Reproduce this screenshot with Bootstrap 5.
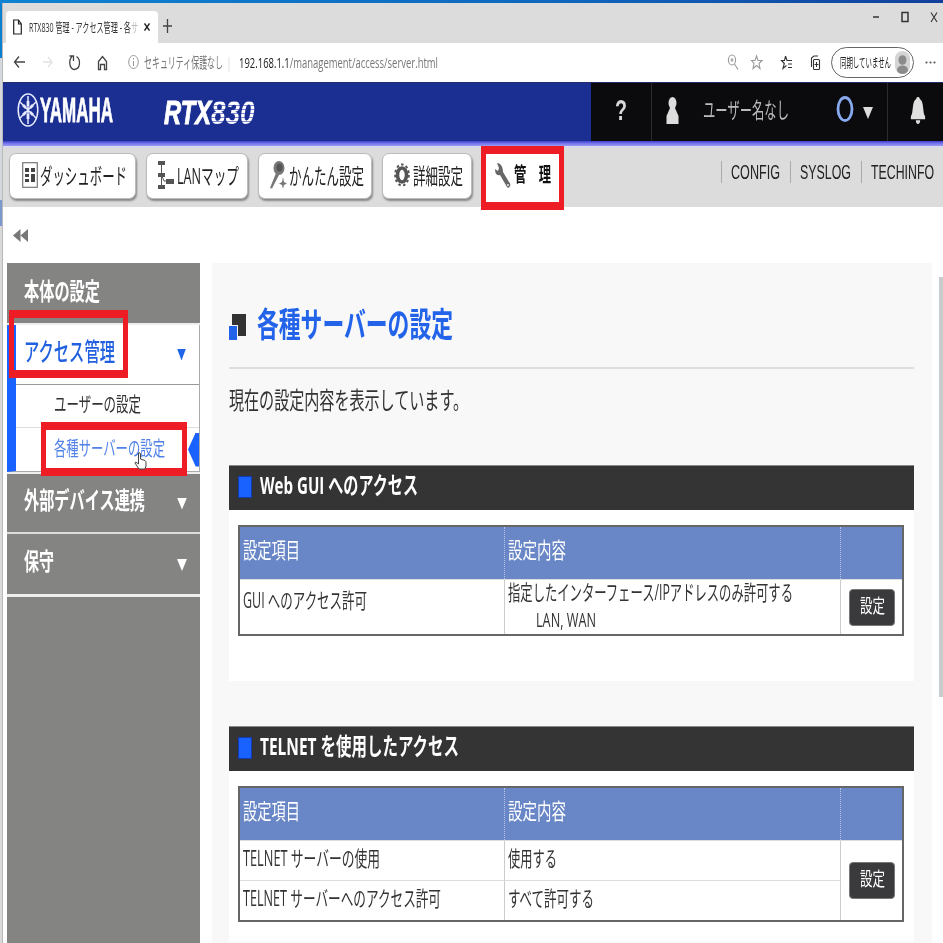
<!DOCTYPE html>
<html lang="ja">
<head>
<meta charset="utf-8">
<title>RTX830 管理</title>
<link rel="stylesheet" href="https://cdn.jsdelivr.net/npm/bootstrap@5.3.0/dist/css/bootstrap.min.css">
<style>
body{width:943px;height:943px;overflow:hidden;background:#fff;color:#333;font-family:"Open Sans","Noto Sans CJK JP",sans-serif;line-height:1;}
.desk{width:943px;height:943px;background:linear-gradient(#0b7fd0 0 58px,#d5d9dd 58px 200px,#7c98cf 200px 226px,#d9d9d9 226px);padding:3px 0 0 2px;}
.deskbar{top:0;left:0;height:3px;background:linear-gradient(90deg,#0e83d2,#0f66bd 60%,#11409c);}
.win{height:940px;background:#fff;border-left:1px solid #b9b9b9}
.fit{display:inline-block;white-space:nowrap;transform-origin:0 50%;flex:none}
svg{flex:none;display:block}
.tabs{height:40px;background:#dcdcdc;padding:8px 0 0 3px}
.tab-on{width:152px;height:32px;background:#fff;border-radius:4px 4px 0 0;padding-left:7px;font-size:13px}
.addr{height:39px;font-size:15px;color:#777}
.pill{width:83px;height:31px;border:1.5px solid #666;border-radius:16px;font-size:13px;color:#222;padding-left:8px}
.avatar{width:15px;height:23px;border-radius:8px;background:#d4d4d4;overflow:hidden}
.hdr{height:59px;background:#1b2f92;border-top:1px solid #222c66;color:#fff}
.hdr-r{width:352px;background:#0b0b0e}
.cell-r{border-left:1px solid #2c2c30}
.logo-a,.logo-b{font:italic 700 34px/36px "Liberation Sans",sans-serif}
.logo-a{-webkit-text-stroke:1px #fff}
.logo-b{color:transparent;background:repeating-linear-gradient(#fff 0 2.7px,#7d8bd0 2.7px 4px);-webkit-background-clip:text;background-clip:text;padding-right:3px}
.strip{height:5px;background:linear-gradient(#3d3cc8,#7776ee 50%,#9b9af0)}
.mainnav{height:61px;background:#dcdcdc;border-top:2px solid #dadaec;padding-left:6px}
.nbtn{height:46px;background:#fff;border:1px solid #bbb;border-radius:7px;box-shadow:1px 2px 2px #888;font-size:22px;color:#222;padding:0 0 2px}
.lnk{font-family:"Liberation Sans",sans-serif;font-size:21px;color:#222;border-left:1px solid #aaa;height:22px}
.side{width:193px;margin-left:4px;background:#848483;color:#fff;height:680px;font-size:24px;font-weight:700}
.mi{height:60px;padding-left:17px;padding-right:13px}
.sub{background:#fff;border-left:9px solid #1a62ff;height:147px;border-right:1px solid #aaa;color:#333;font-weight:400;border-bottom:1px solid #aaa}
.tri{width:10px;height:12px;background:#fff;clip-path:polygon(0 0,100% 0,50% 100%)}
.content-bg{width:720px;margin-left:12px;background:#f8f8f8;height:680px;padding:0 18px 0 17px}
.ttl{height:106px;font-size:34px;font-weight:700;color:#2263ea;border-bottom:2px solid #dedddb;padding-top:18px}
.desc{height:96px;padding-top:19px;font-size:24px}
.pan{background:#fff;height:216px;margin-bottom:45px}
.pan-h{height:45px;background:#343434;border-top:1px solid #888;color:#fff;font-weight:700;font-size:24px;padding:0 0 4px 10px}
.sq{width:12px;height:20px;background:#1a62ff;outline:1px solid #123ab0;margin-top:2px}
.tb{width:666px;margin:15px 0 0 9px;border:2px solid #666;table-layout:fixed;font-size:21px;border-collapse:separate;border-spacing:0}
.tb th{background:#6987c7;color:#fff;font-weight:400;height:52px;padding:0 0 9px 3px;vertical-align:middle;border-right:1px dotted #b6c5ea;font-size:22px}
.tb td{padding:0 0 0 3px;vertical-align:middle;border-right:1px solid #ccc;border-top:1px solid #ddd}
.tb th:last-child,.tb td:last-child{border-right:0}
.tb td:last-child,.tb td.act{padding-left:8px;border-right:0}
.tb td.mid{padding-left:3px;border-right:1px solid #ccc}
.btn-set{width:46px;height:37px;padding:0 0 2px;background:#3a3a3c;color:#fff;border:1px solid #777;border-radius:4px;font-size:19px}
.red{border:7px solid #ee1c25;z-index:5}
</style>
<script src="https://cdn.jsdelivr.net/npm/bootstrap@5.3.0/dist/js/bootstrap.bundle.min.js"></script>
</head>
<body>
<div class="desk position-relative">
<div class="deskbar position-absolute w-100"></div>
<div class="win">
  <div class="tabs d-flex">
    <div class="tab-on d-flex align-items-center">
      <svg width="9" height="16" viewBox="0 0 9 16" fill="none" stroke="#222" stroke-width="1.2"><path d="M.7 1H5.5L8.3 5V15H.7ZM5.5 1V5H8.3"/></svg>
      <span class="fit" style="margin-left:7px" data-w="109">RTX830 管理 - アクセス管理 - 各<span style="color:#bbb">サ</span></span>
      <svg style="margin-left:6px" width="6" height="8" viewBox="0 0 6 8" stroke="#222" stroke-width="1.4"><path d="M.5.5 5.5 7.500M5.500.5.5 7.500"/></svg>
    </div>
    <svg class="mt-2" style="margin-left:5px" width="9" height="14" viewBox="0 0 9 14" stroke="#444" stroke-width="1.3"><path d="M4.5 0V14M0 7H9"/></svg>
    <svg class="ms-auto" style="margin-right:4px" width="66" height="18" viewBox="0 0 66 18" fill="none" stroke="#333" stroke-width="1.5"><path d="M0 6H6"/><rect x="29" y="1.5" width="6" height="9"/><path d="M58 1.5 64 11M64 1.5 58 11" stroke-width="1.1"/></svg>
  </div>
  <div class="addr d-flex align-items-center">
    <svg width="141" height="39" viewBox="3 43 141 39" fill="none" stroke="#444" stroke-width="1.3"><path d="M25 62H15M19 56.5 14.5 62 19 67.5"/><path d="M43 62H52M48 57 52 62 48 67" stroke="#e2e2e2"/><path d="M72 56.5C68.500 60 69 69 74.500 69.500C80.500 69 81 59.500 76.500 56.500M69.500 56H73.500V61"/><path d="M98.500 61.500 102.500 56.500 106.500 61.500V69.500H104.500V64.500H100.500V69.500H98.500Z"/><g stroke="#999" stroke-width="1"><ellipse cx="133.500" cy="62" rx="4.800" ry="6.500"/><path d="M133.500 61V66M133.500 58V59.500"/></g></svg>
    <span class="fit ms-0" data-w="79">セキュリティ保護なし</span>
    <span class="fit mx-1" style="color:#ccc;font-size:14px" data-w="4">|</span>
    <span class="fit" data-w="199"><span style="color:#222">192.168.1.1</span>/management/access/server.html</span>
    <svg class="ms-auto me-2" width="96" height="24" viewBox="727 51 96 24" fill="none" stroke="#999" stroke-width="1.1"><ellipse cx="732" cy="60" rx="3.600" ry="5"/><path d="M734.500 64 738 69.500M730.500 60H733.500M732 58V62"/><path d="M756.500 56 758 60.500H762L759 63.500 760 68.500 756.500 65.500 753 68.500 754 63.500 751.500 60.500H755Z"/><g stroke="#333"><path d="M785.500 56 784.500 60.500H781.500L784.300 63.500 783 68.500 786.500 65.500M785.500 56 787 60.500H792M788 64H792M788 67.500H792"/><rect x="813.500" y="59.500" width="6" height="10" rx="1"/><path d="M811.500 67V58L814 56H818M816.500 62V67M814.500 64.500H818.500"/></g></svg>
    <div class="pill d-flex align-items-center"><span class="fit" data-w="51">同期していません</span><div class="avatar ms-1 pt-1"><svg width="15" height="20" viewBox="0 0 15 20" fill="#8b8b8b"><ellipse cx="7.500" cy="5" rx="4" ry="4.800"/><ellipse cx="7.500" cy="15" rx="5.500" ry="4.500"/></svg></div></div>
    <svg style="margin:0 7px 0 11px" width="11" height="3" viewBox="0 0 11 3" fill="#555"><circle cx="1.500" cy="1.500" r="1.100"/><circle cx="5.500" cy="1.500" r="1.100"/><circle cx="9.500" cy="1.500" r="1.100"/></svg>
  </div>
  <div class="hdr d-flex">
    <div class="d-flex flex-grow-1 align-items-center pb-1">
      <svg style="margin-left:13px" width="24" height="36" viewBox="0 0 24 36" fill="none" stroke="#e6ebff"><ellipse cx="12" cy="18" rx="9.800" ry="16" stroke-width="1.500"/><path d="M12 4V32M4 10 20 26M20 10 4 26" stroke-width="1.500"/><path d="M12 9V14M7 13 10 16M17 13 14 16M12 22V27M7 23 10 20M17 23 14 20" stroke-width="2.800"/></svg>
      <span class="fit" style="font:700 35px 'Liberation Sans',sans-serif;line-height:36px;-webkit-text-stroke:.8px #fff" data-w="73">YAMAHA</span>
      <span class="fit logo-a" style="margin-left:51px;margin-top:4px" data-w="47">RTX</span>
      <span class="fit logo-b" style="margin-top:4px" data-w="46">830</span>
    </div>
    <div class="hdr-r d-flex">
      <div class="d-flex align-items-center justify-content-center pb-1" style="width:60px;font:700 30px 'Liberation Sans',sans-serif;color:#d8d8d8"><span class="fit" data-w="12">?</span></div>
      <div class="cell-r d-flex align-items-center pb-1" style="width:236px">
        <svg style="margin-left:14px" width="13" height="29" viewBox="0 0 13 29" fill="#ddd"><ellipse cx="6.500" cy="7" rx="4" ry="6"/><path d="M4 12H9L12.500 20V28H.5V20Z"/></svg>
        <span class="fit" style="margin-left:24px;margin-bottom:3px;font-size:22px;color:#bbb" data-w="86">ユーザー名なし</span>
        <svg style="margin-left:47px" width="18" height="30" viewBox="0 0 18 30" fill="none" stroke="#88a9ee" stroke-width="2.800"><ellipse cx="9" cy="14" rx="7" ry="11.500"/></svg>
        <div class="tri" style="margin-left:9px;margin-top:6px;background:#ddd"></div>
      </div>
      <div class="cell-r d-flex align-items-center flex-grow-1 pb-1"><svg style="margin-left:22px" width="16" height="27" viewBox="0 0 18 28" preserveAspectRatio="none" fill="#e0e0e0"><path d="M9 0C11 0 11 2 11 2C16 4 14 17 17 20V23H1V20C4 17 2 4 7 2C7 2 7 0 9 0ZM6.500 24H11.500Q11 28 9 28Q7 28 6.500 24Z"/></svg></div>
    </div>
  </div>
  <div class="strip"></div>
  <div class="mainnav d-flex align-items-start">
    <div class="nbtn btn d-flex align-items-center" style="width:127px;margin-top:5px;padding-left:12px">
      <svg width="16" height="26" viewBox="0 0 16 26" fill="#444"><rect x=".7" y=".7" width="14.600" height="24.600" fill="none" stroke="#777" stroke-width="1.200"/><path d="M3 6H7V10H3ZM9 6H13V10H9ZM3 12H7V15H3ZM3 17H7V20H3ZM9 12H13V20H9Z"/></svg>
      <span class="fit" style="margin-left:2px" data-w="87">ダッシュボード</span></div>
    <div class="nbtn btn d-flex align-items-center" style="width:102px;margin:5px 0 0 10px;padding-left:10px">
      <svg width="17" height="30" viewBox="0 0 17 30" fill="#555"><path d="M1 1H8V5H1ZM1 13H8V17H1ZM1 25H8V29H1ZM9 19H17V24H9Z"/><path d="M4.500 4V26M4.500 15 7 21H12" fill="none" stroke="#555"/></svg>
      <span class="fit" style="margin-left:3px" data-w="62">LANマップ</span></div>
    <div class="nbtn btn d-flex align-items-center" style="width:114px;margin:5px 0 0 10px;padding-left:10px">
      <svg width="19" height="30" viewBox="0 0 19 30" fill="#777"><ellipse cx="10" cy="8" rx="5.500" ry="7"/><ellipse cx="10.500" cy="7.500" rx="3" ry="4" fill="#555"/><path d="M7 13 1 28 3 28.500 10 15Z"/><path d="M14 17 15 22 18 23.500 15 25 14 29 13 25 10 23.500 13 22Z"/></svg>
      <span class="fit" data-w="75" style="margin-left:1px">かんたん設定</span></div>
    <div class="nbtn btn d-flex align-items-center" style="width:90px;margin:5px 0 0 10px;padding-left:11px">
      <svg width="16" height="26" viewBox="0 0 16 26"><ellipse cx="8" cy="13" rx="4.500" ry="7" fill="none" stroke="#555" stroke-width="3.500"/><ellipse cx="8" cy="13" rx="6.800" ry="10.500" fill="none" stroke="#555" stroke-width="2" stroke-dasharray="2.600 2.400"/></svg>
      <span class="fit" data-w="50" style="margin-left:3px">詳細設定</span></div>
    <div class="d-flex align-items-center bg-white" style="width:77px;height:59px;margin-left:12px;padding:0 0 5px 10px;font-size:20px;color:#111;font-weight:700">
      <svg width="17" height="27" viewBox="0 0 17 27"><path d="M3 1 5 6 4 9 1 7C1 12 3 14 6 13L13 25Q15 27 16 24Q17 22 15 20L9 10C9 4 6 1 3 1Z" fill="#666"/><circle cx="14" cy="23" r="1" fill="#eee"/></svg>
      <span class="fit" style="margin-left:3px" data-w="37">管　理</span></div>
    <div class="ms-auto d-flex" style="margin-top:13px">
      <div class="lnk" style="width:69px;padding-left:9px"><span class="fit" data-w="49">CONFIG</span></div>
      <div class="lnk" style="width:71px;padding-left:9px"><span class="fit" data-w="51">SYSLOG</span></div>
      <div class="lnk" style="width:82px;padding-left:9px"><span class="fit" data-w="63">TECHINFO</span></div>
    </div>
  </div>
  <div style="height:56px;padding:22px 0 0 10px"><svg width="15" height="13" viewBox="0 0 15 13" fill="#777"><path d="M7.500 0V13L0 6.500ZM15 0V13L7.500 6.500Z"/></svg></div>
  <div class="d-flex">
    <div class="side">
      <div class="mi d-flex align-items-center pb-1"><span class="fit" data-w="76">本体の設定</span></div>
      <div style="height:2px;background:#eee"></div>
      <div class="sub">
        <div class="d-flex align-items-center" style="height:60px;border-bottom:1px solid #999;padding:0 13px 0 8px;font-weight:500;color:#2160df;font-size:25px"><span class="fit" style="margin-bottom:6px" data-w="91">アクセス管理</span><div class="tri ms-auto" style="background:#2165ea;width:9px"></div></div>
        <div class="d-flex align-items-center" style="height:43px;border-bottom:1px solid #ddd;padding-left:38px;font-size:20px"><span class="fit" style="margin-bottom:2px" data-w="87">ユーザーの設定</span></div>
        <div class="d-flex align-items-center" style="height:43px;padding-left:38px;font-size:20px;color:#5080e8"><span class="fit" style="margin-bottom:1px" data-w="111">各種サーバーの設定</span><div class="ms-auto" style="width:11px;height:34px;background:#1a62ff;clip-path:polygon(0 50%,70% 0,100% 0,100% 100%,70% 100%)"></div></div>
      </div>
      <div style="height:2px;background:#eee"></div>
      <div class="mi d-flex align-items-center" style="border-bottom:2px solid #ddd;height:60px;padding-bottom:7px"><span class="fit" data-w="121">外部デバイス連携</span><div class="tri ms-auto mt-2"></div></div>
      <div class="mi d-flex align-items-center" style="border-bottom:3px solid #eee;height:63px;padding-bottom:6px"><span class="fit" data-w="30">保守</span><div class="tri ms-auto mt-2"></div></div>
    </div>
    <div class="content-bg">
      <div class="ttl d-flex align-items-center"><svg style="margin-top:6px" width="17" height="28" viewBox="0 0 17 28"><path d="M3 1H17V23H3Z" fill="#333"/><path d="M0 12H9V27H0Z" fill="#f8f8f8"/><path d="M0 13H8V27H0Z" fill="#2263ea"/></svg><span class="fit" style="margin-left:11px" data-w="196">各種サーバーの設定</span></div>
      <div class="desc"><span class="fit" data-w="239">現在の設定内容を表示しています。</span></div>
      <div class="pan">
        <div class="pan-h d-flex align-items-center"><div class="sq"></div><span class="fit" style="margin-left:9px;margin-bottom:3px" data-w="158">Web GUI へのアクセス</span></div>
        <table class="tb"><colgroup><col style="width:265px"><col style="width:336px"><col></colgroup>
          <tr><th><span class="fit" data-w="57">設定項目</span></th><th><span class="fit" data-w="58">設定内容</span></th><th></th></tr>
          <tr style="height:55px"><td><div style="margin-bottom:14px"><span class="fit" data-w="124">GUI へのアクセス許可</span></div></td><td><div style="line-height:27px;margin-top:-2px"><span class="fit" data-w="285">指定したインターフェース/IPアドレスのみ許可する</span><br><span class="fit" style="margin-left:28px;font-size:20px" data-w="60">LAN, WAN</span></div></td><td><button class="btn btn-set"><span class="fit" data-w="25">設定</span></button></td></tr>
        </table>
      </div>
      <div class="pan">
        <div class="pan-h d-flex align-items-center"><div class="sq"></div><span class="fit" style="margin-left:9px;margin-bottom:3px" data-w="199">TELNET を使用したアクセス</span></div>
        <table class="tb"><colgroup><col style="width:265px"><col style="width:336px"><col></colgroup>
          <tr><th><span class="fit" data-w="57">設定項目</span></th><th><span class="fit" data-w="58">設定内容</span></th><th></th></tr>
          <tr style="height:40px"><td><span class="fit" style="margin-bottom:5px" data-w="137">TELNET サーバーの使用</span></td><td class="mid"><span class="fit" style="margin-bottom:5px" data-w="49">使用する</span></td><td class="act" rowspan="2"><button class="btn btn-set"><span class="fit" data-w="25">設定</span></button></td></tr>
          <tr style="height:40px"><td><span class="fit" style="margin-bottom:5px" data-w="198">TELNET サーバーへのアクセス許可</span></td><td class="mid"><span class="fit" style="margin-bottom:5px" data-w="86">すべて許可する</span></td></tr>
        </table>
      </div>
    </div>
  </div>
</div>
<div class="position-absolute" style="left:939px;top:277px;width:4px;height:420px;background:#c9cacb"></div>
<div class="red position-absolute" style="left:481px;top:146px;width:83px;height:64px;border-width:8px 5px"></div>
<div class="red position-absolute" style="left:9px;top:310px;width:119px;height:68px;border-width:8px 5px"></div>
<div class="red position-absolute" style="left:41px;top:422px;width:146px;height:54px;border-width:8px 5px"></div>
<svg class="position-absolute" style="left:134px;top:452px;z-index:6" width="13" height="18" viewBox="0 0 13 18" fill="#fff" stroke="#444" stroke-width="1"><path d="M4.500 1Q6 0 6.500 2V7L11 8.500Q12 9 12 11V14L11 17H5L1 11Q1 9 4.500 12Z"/></svg>
</div>
<script>
document.querySelectorAll('.fit').forEach(function(el){
  var n=el.getBoundingClientRect().width,w=+el.dataset.w;
  el.style.transform='scaleX('+w/n+')';
  el.style.marginRight=(w-n)+'px';
});
</script>
</body>
</html>
